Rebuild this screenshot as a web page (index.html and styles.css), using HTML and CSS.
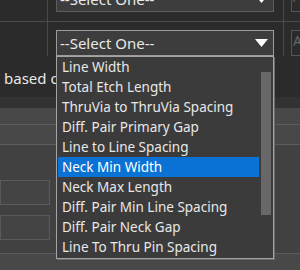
FILE: index.html
```html
<!DOCTYPE html>
<html lang="en">
<head>
    <meta charset="UTF-8">
    <title>Rule Editor</title>
    <link rel="stylesheet" href="styles.css">
</head>
<body>

<div class="top">
    <div class="row row-a">
        <div class="lead"></div>
        <div class="vline"></div>
        <div class="select dim">
            <span>--Select One--</span>
            <svg class="arrow" width="13" height="8" viewBox="0 0 13 8"><polygon points="0,0 13,0 6.5,8" fill="#fff"/></svg>
        </div>
        <div class="vline"></div>
        <div class="btn">A</div>
    </div>
    <div class="hline"></div>
    <div class="row row-b">
        <div class="lead"></div>
        <div class="vline"></div>
        <div class="select open">
            <span>--Select One--</span>
            <svg class="arrow" width="13" height="8" viewBox="0 0 13 8"><polygon points="0,0 13,0 6.5,8" fill="#fff"/></svg>

            <ul class="list">
                <li>Line Width</li>
                <li>Total Etch Length</li>
                <li>ThruVia to ThruVia Spacing</li>
                <li>Diff. Pair Primary Gap</li>
                <li>Line to Line Spacing</li>
                <li class="active">Neck Min Width</li>
                <li>Neck Max Length</li>
                <li>Diff. Pair Min Line Spacing</li>
                <li>Diff. Pair Neck Gap</li>
                <li>Line To Thru Pin Spacing</li>
                <div class="thumb"></div>
            </ul>
        </div>
        <div class="vline"></div>
        <div class="btn">A</div>
    </div>
</div>

<div class="label">based on rule type</div>

<div class="grid">
    <div class="band"></div>
    <div class="cellrow first"></div>
    <div class="cellrow"></div>
    <div class="panel">
        <div class="field"></div>
        <div class="field"></div>
    </div>
    <div class="cellrow last"></div>
</div>

</body>
</html>
```

FILE: styles.css
```css
body {
    margin: 0;
    background-color: #2b2b2b;
    color: #e8e8e8;
    font-family: 'Noto Sans', sans-serif;
    font-size: 14px;
    width: 300px;
    height: 270px;
    overflow: hidden;
}
.top {
    display: flex;
    flex-direction: column;
}
.row {
    display: flex;
}
.row > div {
    flex-shrink: 0;
}
.row-a {
    height: 21px;
    overflow: hidden;
}
.row-b {
    height: 34px;
}
.lead {
    width: 47px;
}
.vline {
    width: 1px;
    background-color: #4a4a4a;
}
.hline {
    height: 1px;
    background-color: #4a4a4a;
}
.select {
    position: relative;
    box-sizing: border-box;
    width: 218px;
    height: 26px;
    margin-left: 8px;
    margin-right: 9px;
    padding: 0 0 0 3px;
    display: flex;
    align-items: center;
    justify-content: space-between;
    background-color: #3d3d3d;
    border: 1px solid #9c9c9c;
    font-size: 15px;
}
.row-a .select {
    margin-top: -14px;
    border-color: #5e5e5e;
}
.row-b .select {
    margin-top: 8px;
}
.arrow {
    margin-right: 5px;
}
.btn {
    box-sizing: border-box;
    width: 20px;
    height: 26px;
    margin-left: 7px;
    border: 1px solid #555;
    color: #666;
    font-size: 14px;
    padding-left: 1px;
}
.row-a .btn {
    margin-top: -14px;
}
.row-b .btn {
    margin-top: 8px;
}
.list {
    position: absolute;
    top: 25px;
    left: -1px;
    width: 218px;
    box-sizing: border-box;
    margin: 0;
    padding: 0 14px 1px 1px;
    list-style: none;
    background-color: #3b3b3b;
    border: 1px solid #a4a4a4;
    box-shadow: 1px 1px 0 #6a6a6a;
    font-size: 13.5px;
    z-index: 5;
}
.list li {
    height: 20px;
    line-height: 20px;
    padding-left: 4px;
    white-space: nowrap;
}
.list li.active {
    background-color: #0a72d4;
    color: #fff;
}
.thumb {
    position: absolute;
    top: 15px;
    right: 2px;
    width: 10px;
    height: 143px;
    background-color: #686868;
}
.label {
    height: 41px;
    padding: 12px 0 0 4px;
    box-sizing: border-box;
    font-size: 15px;
}
.grid {
    display: flex;
    flex-direction: column;
}
.band {
    height: 11px;
    background-color: #323232;
}
.cellrow {
    height: 19px;
    background-color: #484848;
    border-bottom: 1px solid #5c5c5c;
}
.cellrow.first {
    height: 16px;
}
.cellrow.last {
    border-top: 1px solid #5c5c5c;
    border-bottom: none;
    height: 20px;
}
.panel {
    height: 108px;
    background-color: #414141;
    padding-top: 35px;
    box-sizing: border-box;
    display: flex;
    flex-direction: column;
    gap: 10px;
}
.field {
    width: 50px;
    height: 25px;
    box-sizing: border-box;
    border: 1px solid #5a5a5a;
    background-color: #444;
}
```
